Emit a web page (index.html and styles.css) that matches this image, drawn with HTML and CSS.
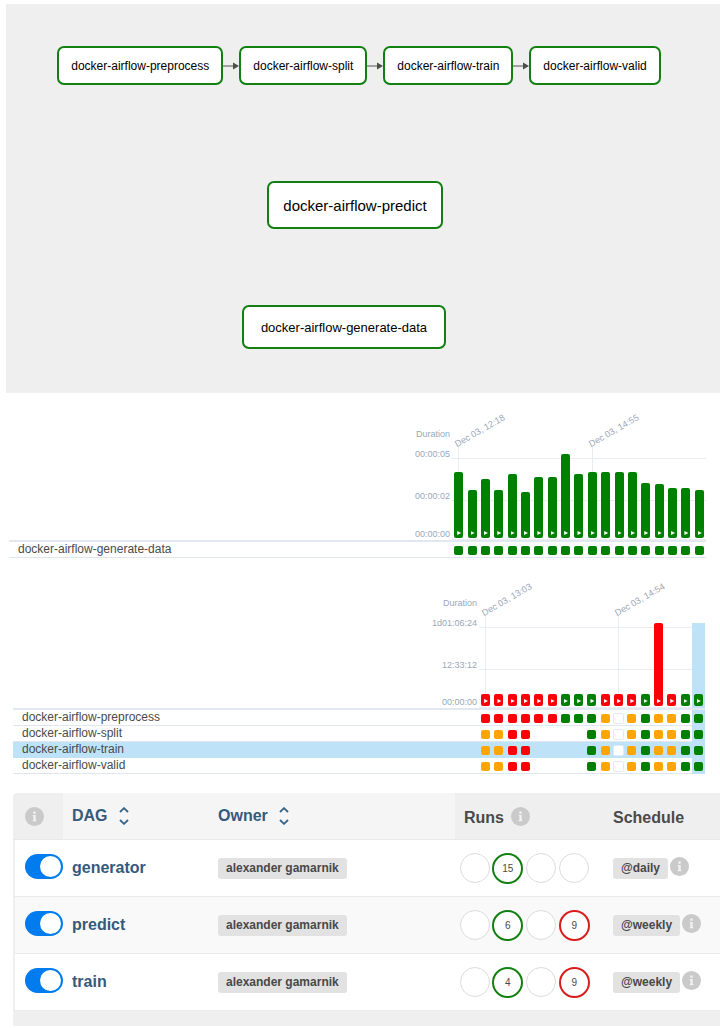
FILE: index.html
```html
<!DOCTYPE html>
<html lang="en">
<head>
<meta charset="utf-8">
<meta name="viewport" content="width=device-width, initial-scale=1">
<title>Airflow DAGs</title>
<link rel="stylesheet" href="styles.css">
</head>
<body>
<svg class="defs" aria-hidden="true">
  <symbol id="info" viewBox="0 0 19 19"><circle cx="9.500" cy="9.500" r="9.500" fill="#cacaca"/><path d="M8.300 4.600h2.400v2.100H8.300zM7.800 8h2.900v5h.6v1.300H7.700V13h.7V9.300h-.6z" fill="#f2f2f2"/></symbol>
  <symbol id="sort" viewBox="0 0 10 18"><path d="M1 5 5 1.200 9 5M1 13l4 3.800L9 13" fill="none" stroke="#3b6182" stroke-width="1.800"/></symbol>
  <symbol id="arrow" viewBox="0 0 16 8"><path d="M0 4h11" stroke="#555" stroke-width="1"/><path d="M10 .500 16 4l-6 3.500z" fill="#4d4d4d"/></symbol>
</svg>

<section class="graph" aria-label="DAG graphs">
  <div class="chain">
    <div class="node">docker-airflow-preprocess</div>
    <svg class="arrow"><use href="#arrow"/></svg>
    <div class="node">docker-airflow-split</div>
    <svg class="arrow"><use href="#arrow"/></svg>
    <div class="node">docker-airflow-train</div>
    <svg class="arrow"><use href="#arrow"/></svg>
    <div class="node">docker-airflow-valid</div>
  </div>
  <div class="node node-predict">docker-airflow-predict</div>
  <div class="node node-generate">docker-airflow-generate-data</div>
</section>

<section class="chart chart-generator" aria-label="generator runs">
  <div class="chart-head">
    <div class="axis"><span>Duration</span><span>00:00:05</span><span>00:00:02</span><span>00:00:00</span></div>
    <div class="plot cols">
      <div class="tick"><time>Dec 03, 12:18</time><i class="bar ok" style="height:66px"></i></div>
      <div><i class="bar ok" style="height:48px"></i></div>
      <div><i class="bar ok" style="height:59px"></i></div>
      <div><i class="bar ok" style="height:48px"></i></div>
      <div><i class="bar ok" style="height:64px"></i></div>
      <div><i class="bar ok" style="height:46px"></i></div>
      <div><i class="bar ok" style="height:61px"></i></div>
      <div><i class="bar ok" style="height:61px"></i></div>
      <div><i class="bar ok" style="height:84px"></i></div>
      <div><i class="bar ok" style="height:64px"></i></div>
      <div class="tick"><time>Dec 03, 14:55</time><i class="bar ok" style="height:66px"></i></div>
      <div><i class="bar ok" style="height:66px"></i></div>
      <div><i class="bar ok" style="height:66px"></i></div>
      <div><i class="bar ok" style="height:66px"></i></div>
      <div><i class="bar ok" style="height:55px"></i></div>
      <div><i class="bar ok" style="height:54px"></i></div>
      <div><i class="bar ok" style="height:50px"></i></div>
      <div><i class="bar ok" style="height:50px"></i></div>
      <div><i class="bar ok" style="height:48px"></i></div>
    </div>
  </div>
  <div class="tasks">
    <div class="task"><span>docker-airflow-generate-data</span>
      <div class="cols"><b class="ok"></b><b class="ok"></b><b class="ok"></b><b class="ok"></b><b class="ok"></b><b class="ok"></b><b class="ok"></b><b class="ok"></b><b class="ok"></b><b class="ok"></b><b class="ok"></b><b class="ok"></b><b class="ok"></b><b class="ok"></b><b class="ok"></b><b class="ok"></b><b class="ok"></b><b class="ok"></b><b class="ok"></b></div>
    </div>
  </div>
</section>

<section class="chart chart-train" aria-label="train runs">
  <div class="chart-head">
    <div class="axis"><span>Duration</span><span>1d01:06:24</span><span>12:33:12</span><span>00:00:00</span></div>
    <div class="plot cols">
      <div class="tick"><time>Dec 03, 13:03</time><i class="bar fail"></i></div>
      <div><i class="bar fail"></i></div>
      <div><i class="bar fail"></i></div>
      <div><i class="bar fail"></i></div>
      <div><i class="bar fail"></i></div>
      <div><i class="bar fail"></i></div>
      <div><i class="bar ok"></i></div>
      <div><i class="bar ok"></i></div>
      <div><i class="bar ok"></i></div>
      <div><i class="bar fail"></i></div>
      <div class="tick"><time>Dec 03, 14:54</time><i class="bar fail"></i></div>
      <div><i class="bar fail"></i></div>
      <div><i class="bar ok"></i></div>
      <div><i class="bar fail" style="height:83px"></i></div>
      <div><i class="bar fail"></i></div>
      <div><i class="bar ok"></i></div>
      <div class="selected"><i class="bar ok"></i></div>
    </div>
  </div>
  <div class="tasks">
    <div class="task"><span>docker-airflow-preprocess</span>
      <div class="cols"><b class="fail"></b><b class="fail"></b><b class="fail"></b><b class="fail"></b><b class="fail"></b><b class="fail"></b><b class="ok"></b><b class="ok"></b><b class="ok"></b><b class="retry"></b><b class="none"></b><b class="retry"></b><b class="ok"></b><b class="retry"></b><b class="retry"></b><b class="ok"></b><b class="ok selected"></b></div>
    </div>
    <div class="task"><span>docker-airflow-split</span>
      <div class="cols"><b class="retry"></b><b class="retry"></b><b class="fail"></b><b class="fail"></b><b></b><b></b><b></b><b></b><b class="ok"></b><b class="retry"></b><b class="none"></b><b class="retry"></b><b class="ok"></b><b class="retry"></b><b class="retry"></b><b class="ok"></b><b class="ok selected"></b></div>
    </div>
    <div class="task active"><span>docker-airflow-train</span>
      <div class="cols"><b class="retry"></b><b class="retry"></b><b class="fail"></b><b class="fail"></b><b></b><b></b><b></b><b></b><b class="ok"></b><b class="retry"></b><b class="none"></b><b class="retry"></b><b class="ok"></b><b class="retry"></b><b class="retry"></b><b class="ok"></b><b class="ok selected"></b></div>
    </div>
    <div class="task"><span>docker-airflow-valid</span>
      <div class="cols"><b class="retry"></b><b class="retry"></b><b class="fail"></b><b class="fail"></b><b></b><b></b><b></b><b></b><b class="ok"></b><b class="retry"></b><b class="none"></b><b class="retry"></b><b class="ok"></b><b class="retry"></b><b class="retry"></b><b class="ok"></b><b class="ok selected"></b></div>
    </div>
  </div>
</section>

<div class="dags">
<table>
  <colgroup><col class="c-toggle"><col class="c-dag"><col class="c-owner"><col class="c-runs"><col></colgroup>
  <thead>
    <tr>
      <th class="toggle-cell"><svg class="info" role="img" aria-label="Pause or unpause"><use href="#info"/></svg></th>
      <th class="sortable"><button type="button">DAG<svg class="sort"><use href="#sort"/></svg></button></th>
      <th class="sortable"><button type="button">Owner<svg class="sort"><use href="#sort"/></svg></button></th>
      <th><div class="heading">Runs<svg class="info" role="img" aria-label="Run states"><use href="#info"/></svg></div></th>
      <th><div class="heading">Schedule</div></th>
    </tr>
  </thead>
  <tbody>
    <tr>
      <td class="toggle-cell"><input class="toggle" type="checkbox" checked aria-label="generator"></td>
      <td><a class="dag" href="#">generator</a></td>
      <td><a class="badge" href="#">alexander gamarnik</a></td>
      <td class="runs-cell"><div class="runs"><span></span><span class="success">15</span><span></span><span></span></div></td>
      <td><div class="schedule"><a class="badge" href="#">@daily</a><svg class="info" role="img" aria-label="Schedule details"><use href="#info"/></svg></div></td>
    </tr>
    <tr>
      <td class="toggle-cell"><input class="toggle" type="checkbox" checked aria-label="predict"></td>
      <td><a class="dag" href="#">predict</a></td>
      <td><a class="badge" href="#">alexander gamarnik</a></td>
      <td class="runs-cell"><div class="runs"><span></span><span class="success">6</span><span></span><span class="failed">9</span></div></td>
      <td><div class="schedule"><a class="badge" href="#">@weekly</a><svg class="info" role="img" aria-label="Schedule details"><use href="#info"/></svg></div></td>
    </tr>
    <tr>
      <td class="toggle-cell"><input class="toggle" type="checkbox" checked aria-label="train"></td>
      <td><a class="dag" href="#">train</a></td>
      <td><a class="badge" href="#">alexander gamarnik</a></td>
      <td class="runs-cell"><div class="runs"><span></span><span class="success">4</span><span></span><span class="failed">9</span></div></td>
      <td><div class="schedule"><a class="badge" href="#">@weekly</a><svg class="info" role="img" aria-label="Schedule details"><use href="#info"/></svg></div></td>
    </tr>
  </tbody>
</table>
</div>
</body>
</html>
```

FILE: styles.css
```css
* { box-sizing: border-box; }

body {
  margin: 0;
  padding-top: 4px;
  background: #fff;
  color: #4a4a4a;
  font-family: "Liberation Sans", Arial, sans-serif;
}

.defs { display: none; }

/* Graph view */
.graph {
  display: flex;
  flex-direction: column;
  align-items: center;
  margin-left: 6px;
  padding: 42px 18px 44px 10px;
  background: #efefef;
}

.chain { display: flex; align-items: center; }

.node {
  padding: 1px 12px 0;
  border: 2px solid #118011;
  border-radius: 7px;
  background: #fff;
  color: #000;
  font-size: 12px;
  line-height: 34px;
  white-space: nowrap;
}

.arrow { width: 16px; height: 8px; }

.node-predict {
  margin: 96px 8px 0 0;
  padding: 1px 14px 0;
  font-size: 15px;
  line-height: 43px;
}

.node-generate {
  margin: 76px 30px 0 0;
  padding: 1px 17px 0;
  font-size: 13px;
  line-height: 39px;
}

/* Run duration charts */
.chart-generator { --runs: 19; --plot: 254px; --rise: 86px; margin: 0 14px 0 9px; padding-top: 35px; }
.chart-train { --runs: 17; --plot: 226px; --rise: 85px; margin: 39px 15px 0 13px; }

.chart-head { display: flex; justify-content: flex-end; align-items: flex-end; }

.axis {
  display: flex;
  flex-direction: column;
  margin-right: 2px;
  color: #9aa7ba;
  font-size: 9px;
  line-height: 12px;
  text-align: right;
}
.axis span:nth-child(2) { margin: 8px 0 30px; }
.axis span:nth-child(4) { margin-top: 26px; }
.chart-train .axis span:nth-child(4) { margin-top: 25px; }

.cols {
  display: grid;
  grid-template-columns: repeat(var(--runs), 1fr);
  flex: none;
  width: var(--plot);
}

.plot {
  height: var(--rise);
  background:
    linear-gradient(#e9edf1, #e9edf1) 0 4px / 100% 1px no-repeat,
    linear-gradient(#e9edf1, #e9edf1) 0 46px / 100% 1px no-repeat,
    linear-gradient(#e9edf1, #e9edf1) 0 100% / 100% 1px no-repeat;
}
.plot > div {
  position: relative;
  display: flex;
  justify-content: center;
  align-items: flex-end;
  padding-bottom: 2px;
}
.plot .tick::before {
  content: "";
  position: absolute;
  top: -7px;
  bottom: 2px;
  left: 6px;
  width: 1px;
  background: #e9edf1;
}
.tick time {
  position: absolute;
  left: 6px;
  top: -15px;
  color: #9aa7ba;
  font-size: 9px;
  line-height: 10px;
  white-space: nowrap;
  transform: rotate(-30deg);
  transform-origin: left bottom;
}

.bar {
  position: relative;
  width: 9px;
  height: 12px;
  border-radius: 2px;
}
.bar::after {
  content: "";
  position: absolute;
  left: 3px;
  bottom: 3px;
  width: 4px;
  height: 4px;
  background: #fff;
  clip-path: polygon(0 0, 100% 50%, 0 100%);
}

.tasks { border-top: 2px solid #e2e8f0; }
.task {
  display: flex;
  justify-content: space-between;
  height: 16px;
  padding-left: 9px;
  border-bottom: 1px solid #dfe6ee;
  font-size: 12px;
  line-height: 15px;
}
.task b {
  display: flex;
  justify-content: center;
  align-items: center;
  height: 16px;
}
.task b::before {
  content: "";
  width: 9px;
  height: 9px;
  border-radius: 2px;
}
.task.active, .selected { background: #bee3f8; }
.task.active { border-bottom-color: #bee3f8; }

.bar.ok, .task .ok::before { background: #008000; }
.bar.fail, .task .fail::before { background: #fb0007; }
.task .retry::before { background: #ffa500; }
.task .none::before { border: 1px solid #e6eaf0; background: #fff; }

/* DAG list */
.dags {
  margin: 19px 0 2px 13px;
  padding: 0 0 15px;
  border-radius: 4px 0 0 0;
  background: #efefef;
}
table { width: 100%; border-collapse: separate; border-spacing: 0; table-layout: fixed; }
.c-toggle { width: 50px; }
.c-dag { width: 146px; }
.c-owner { width: 246px; }
.c-runs { width: 149px; }

th, td { padding: 0 0 0 9px; text-align: left; vertical-align: middle; }
th { height: 47px; border-bottom: 1px solid #e9e9e9; font-size: 16px; }
td { height: 57px; border-bottom: 1px solid #ebebeb; }
.toggle-cell { padding-left: 12px; }
.sortable { background: #f5f5f5; }
tbody tr { background: #fff; }
tbody tr:nth-child(even) { background: #f9f9f9; }
td:first-child { border-left: 2px solid #efefef; }

th button {
  display: flex;
  align-items: center;
  gap: 11px;
  padding: 0;
  border: 0;
  background: none;
  color: #355a7c;
  font: inherit;
}
.sort { width: 10px; height: 18px; }
.info { display: block; flex: none; width: 19px; height: 19px; }
.heading { display: flex; align-items: center; gap: 7px; padding-top: 4px; }
.heading .info { margin-bottom: 4px; }

td.toggle-cell { padding-left: 10px; }
.toggle {
  display: flex;
  align-items: center;
  justify-content: flex-start;
  appearance: none;
  width: 38px;
  height: 25px;
  margin: 0 0 4px;
  padding: 2px;
  border-radius: 13px;
  background: #aaa;
}
.toggle:checked { justify-content: flex-end; background: #017cee; }
.toggle::before {
  content: "";
  width: 21px;
  height: 21px;
  border-radius: 50%;
  background: #fff;
}

.dag {
  color: #355a7c;
  font-size: 16px;
  font-weight: bold;
  text-decoration: none;
}
.badge {
  display: inline-block;
  padding: 0 8px;
  border-radius: 3px;
  background: #e2e2e2;
  color: #484848;
  font-size: 12px;
  font-weight: bold;
  line-height: 21px;
  text-decoration: none;
  vertical-align: middle;
}

td.runs-cell { padding-left: 3px; }
.runs {
  display: grid;
  grid-template-columns: repeat(4, 1fr);
  justify-items: center;
  align-items: center;
  width: 133px;
}
.runs span {
  width: 30px;
  height: 30px;
  border: 1px solid #dcdcdc;
  border-radius: 50%;
  background: #fff;
  font-size: 10px;
  line-height: 27px;
  text-align: center;
}
.runs .success, .runs .failed { width: 31px; height: 31px; border: 2px solid #118011; }
.runs .failed { border-color: #d91c1c; }
.schedule { display: flex; align-items: center; gap: 2px; }
.schedule .info { margin-bottom: 3px; }
```
